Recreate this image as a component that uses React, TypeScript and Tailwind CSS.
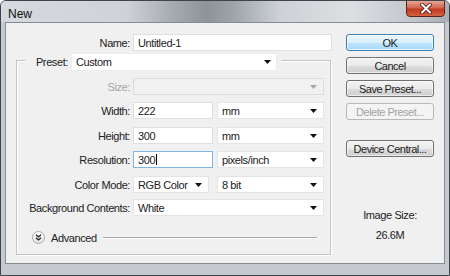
import React from 'react';

const Arrow = ({ disabled = false }: { disabled?: boolean }) => (
  <svg width="7" height="4" viewBox="0 0 7 4" className="shrink-0">
    <path d="M0 0h7L3.5 4z" fill={disabled ? '#a8a8a8' : '#111'} />
  </svg>
);

const Select = ({ value, w, disabled = false }: { value?: string; w: string; disabled?: boolean }) => (
  <div
    className={`${w} h-[17px] flex items-center justify-between pl-[4px] pr-[6px] border ${
      disabled ? 'bg-[#f1f1f1] border-[#dcdcdc]' : 'bg-white border-[#e4e4e4]'
    }`}
  >
    <span className="whitespace-nowrap">{value}</span>
    <Arrow disabled={disabled} />
  </div>
);

const TextBox = ({ value, w, focused = false }: { value: string; w: string; focused?: boolean }) => (
  <div
    className={`${w} h-[17px] flex items-center pl-[4px] bg-white border ${
      focused ? 'border-[#7eb4ea]' : 'border-[#dde0e3]'
    }`}
  >
    <span>{value}</span>
    {focused && <span className="w-px h-[11px] bg-black ml-px" />}
  </div>
);

const Button = ({ label, primary = false, disabled = false }: { label: string; primary?: boolean; disabled?: boolean }) => (
  <div
    className={`w-[88px] h-[17px] flex items-center justify-center rounded-[3px] border whitespace-nowrap tracking-[-0.5px] ${
      primary
        ? 'border-[#3c7fb1] bg-[linear-gradient(#eaf6fd_0%,#d9f0fc_50%,#bee6fd_51%,#a7d9f5_100%)] shadow-[inset_0_0_0_1px_#ffffffaa]'
        : disabled
        ? 'border-[#b5b9bc] bg-[#f4f4f4] text-[#a3a3a3]'
        : 'border-[#707070] bg-[linear-gradient(#f2f2f2_0%,#ebebeb_50%,#dddddd_51%,#cfcfcf_100%)] shadow-[inset_0_0_0_1px_#ffffff99]'
    }`}
  >
    {label}
  </div>
);

const Row = ({ label, labelW, children, className = '', muted = false }: { label: string; labelW: string; children: React.ReactNode; className?: string; muted?: boolean }) => (
  <div className={`flex items-center ${className}`}>
    <div className={`${labelW} text-right whitespace-nowrap ${muted ? 'text-[#a5a5a5]' : ''}`}>{label}</div>
    <div className="ml-[3px] flex items-center">{children}</div>
  </div>
);

export default function App() {
  return (
    <div className="w-[450px] h-[276px] flex flex-col border border-[#3f444a] rounded-t-[6px] overflow-hidden bg-[#c6cace] font-['Liberation_Sans',Arial,sans-serif] text-[11px] tracking-[-0.4px] text-[#222] leading-[14px]">
      {/* title bar */}
      <div className="h-[21px] shrink-0 flex justify-between bg-[linear-gradient(to_right,#d6d9dd_0%,#cfd3d7_28%,#a7acb2_38%,#8d9399_46%,#9ea4aa_52%,#cdd1d5_62%,#dcdfe2_78%,#c2c6cb_92%,#a9aeb4_100%)]">
        <span className="pl-[7px] pt-[6px] text-[12px] tracking-normal text-[#111]">New</span>
        <div className="mr-[4px] w-[39px] h-[17px] -mt-px flex items-center justify-center rounded-b-[4px] border border-[#5a2218] bg-[linear-gradient(#e6a595_0%,#d2674f_45%,#c2391f_55%,#d5633f_100%)]">
          <svg width="12" height="11" viewBox="0 0 12 11">
            <path d="M2 1.5l8 8M10 1.5l-8 8" stroke="#4a1a10" strokeWidth="3.6" strokeLinecap="round" />
            <path d="M2 1.5l8 8M10 1.5l-8 8" stroke="#fff" strokeWidth="2" strokeLinecap="round" />
          </svg>
        </div>
      </div>

      {/* client area */}
      <div className="px-[4px] pb-[11px] flex-1 flex">
        <div className="flex-1 flex border border-[#868c93] bg-[#f0f0f0]">
          {/* left column */}
          <div className="w-[327px] pt-[11px]">
            <Row label="Name:" labelW="w-[124px]">
              <TextBox value="Untitled-1" w="w-[199px]" />
            </Row>

            {/* preset group */}
            <div className="ml-[10px] mt-[9px] w-[315px] border border-[#c3c3c3] shadow-[1px_1px_0_#ffffff,inset_1px_1px_0_#ffffff] pb-[10px]">
              <div className="-mt-[8px] ml-[8px] w-fit flex items-center bg-[#f0f0f0] pl-[10px] pr-[4px]">
                <span className="w-[33px] text-right whitespace-nowrap">Preset:</span>
                <div className="ml-[3px] h-[18px] w-[206px] flex items-center justify-between pl-[4px] pr-[5px] bg-white border border-[#ececec]">
                  <span>Custom</span>
                  <Arrow />
                </div>
              </div>

              <Row label="Size:" labelW="w-[113px]" muted className="mt-[7px]">
                <Select w="w-[191px]" disabled />
              </Row>
              <Row label="Width:" labelW="w-[113px]" className="mt-[7px]">
                <TextBox value="222" w="w-[80px]" />
                <div className="ml-[4px]"><Select value="mm" w="w-[107px]" /></div>
              </Row>
              <Row label="Height:" labelW="w-[113px]" className="mt-[8px]">
                <TextBox value="300" w="w-[80px]" />
                <div className="ml-[4px]"><Select value="mm" w="w-[107px]" /></div>
              </Row>
              <Row label="Resolution:" labelW="w-[113px]" className="mt-[7px]">
                <TextBox value="300" w="w-[80px]" focused />
                <div className="ml-[4px]"><Select value="pixels/inch" w="w-[107px]" /></div>
              </Row>
              <Row label="Color Mode:" labelW="w-[113px]" className="mt-[8px]">
                <Select value="RGB Color" w="w-[76px]" />
                <div className="ml-[8px]"><Select value="8 bit" w="w-[107px]" /></div>
              </Row>
              <Row label="Background Contents:" labelW="w-[113px]" className="mt-[6px]">
                <Select value="White" w="w-[191px]" />
              </Row>

              {/* advanced */}
              <div className="mt-[15px] ml-[15px] mr-[13px] flex items-center h-[13px]">
                <div className="w-[13px] h-[13px] rounded-full border border-[#a9a9a9] bg-[linear-gradient(#ffffff,#e3e3e3)] flex items-center justify-center">
                  <svg width="7" height="7" viewBox="0 0 7 7">
                    <path d="M1 0.8l2.5 2.2 2.5-2.2M1 3.8l2.5 2.2 2.5-2.2" stroke="#222" strokeWidth="1.3" fill="none" />
                  </svg>
                </div>
                <span className="ml-[6px]">Advanced</span>
                <div className="ml-[6px] flex-1 h-px bg-[#a8a8a8] shadow-[0_1px_0_#ffffff]" />
              </div>
            </div>
          </div>

          {/* right column */}
          <div className="ml-[13px] pt-[11px] flex flex-col w-[88px]">
            <Button label="OK" primary />
            <div className="mt-[6px]"><Button label="Cancel" /></div>
            <div className="mt-[6px]"><Button label="Save Preset..." /></div>
            <div className="mt-[6px]"><Button label="Delete Preset..." disabled /></div>
            <div className="mt-[20px]"><Button label="Device Central..." /></div>
            <div className="mt-[51px] text-center">Image Size:</div>
            <div className="mt-[6px] text-center">26.6M</div>
          </div>
        </div>
      </div>
    </div>
  );
}
